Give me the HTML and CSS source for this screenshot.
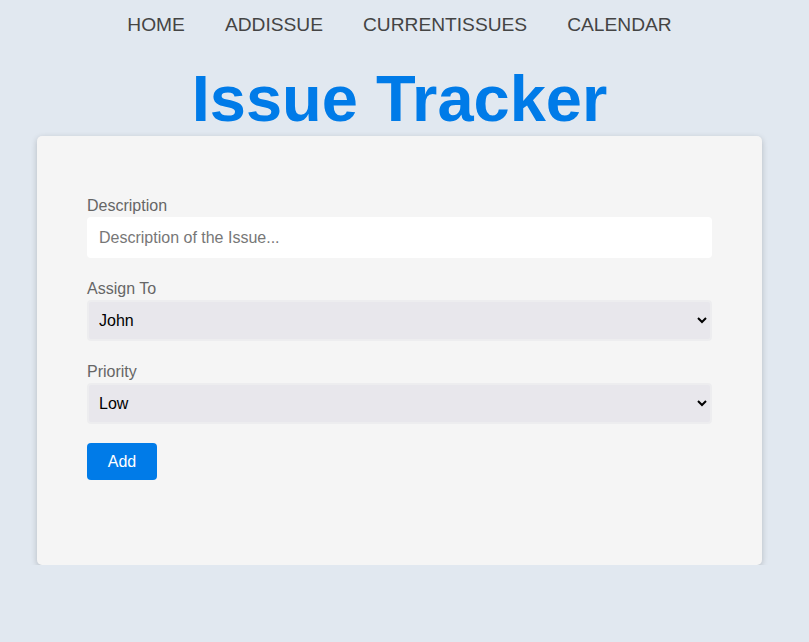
FILE: index.html
```html
<!DOCTYPE html>
<html lang="en">
<head>
<meta charset="utf-8">
<title>Issue Tracker</title>
<link rel="stylesheet" href="styles.css">
</head>
<body>
<div class="page">
  <nav class="nav">
    <a class="nav-link" href="#">HOME</a>
    <a class="nav-link" href="#">ADDISSUE</a>
    <a class="nav-link" href="#">CURRENTISSUES</a>
    <a class="nav-link" href="#">CALENDAR</a>
  </nav>
  <h1 class="title">Issue Tracker</h1>
  <div class="card">
    <form class="form">
      <div class="group">
        <label class="label" for="desc">Description</label>
        <input class="field input" id="desc" type="text" placeholder="Description of the Issue...">
      </div>
      <div class="group">
        <label class="label" for="assign">Assign To</label>
        <select class="field select" id="assign">
          <option>John</option>
          <option>Jane</option>
        </select>
      </div>
      <div class="group">
        <label class="label" for="prio">Priority</label>
        <select class="field select" id="prio">
          <option>Low</option>
          <option>Medium</option>
          <option>High</option>
        </select>
      </div>
      <button class="btn" type="button">Add</button>
    </form>
  </div>
</div>
</body>
</html>
```

FILE: styles.css
```css
html, body {
  margin: 0;
  padding: 0;
  background: #e1e8f0;
  font-family: "Liberation Sans", Arial, sans-serif;
}
.page {
  width: 799px;
}
.nav {
  display: flex;
  justify-content: center;
  gap: 40px;
  padding-top: 14px;
}
.nav-link {
  font-size: 19.2px;
  line-height: 22px;
  color: #444444;
  text-decoration: none;
}
.title {
  margin: 26px 0 0;
  text-align: center;
  font-size: 65px;
  line-height: 74px;
  font-weight: bold;
  color: #007be8;
}
.card {
  margin: 0 37px;
  background: #f5f5f5;
  border-radius: 5px;
  box-shadow: 0 2px 6px rgba(0, 0, 0, 0.2);
  padding: 61px 50px 85px;
}
.form {
  display: flex;
  flex-direction: column;
}
.group {
  display: flex;
  flex-direction: column;
  gap: 2px;
  margin-bottom: 22px;
}
.group:last-of-type {
  margin-bottom: 19px;
}
.label {
  font-size: 16px;
  line-height: 18px;
  color: #666666;
}
.field {
  box-sizing: border-box;
  width: 625px;
  height: 41px;
  margin: 0;
  font-family: "Liberation Sans", Arial, sans-serif;
  font-size: 16px;
  border-radius: 4px;
  outline: none;
}
.input {
  border: none;
  background: #ffffff;
  padding: 0 12px;
  color: #333;
}
.input::placeholder {
  color: #777777;
}
.select {
  background-color: #e8e7ec;
  border: 2px solid #ededef;
  padding: 0 6px 0 6px;
  color: #000;
}
.btn {
  align-self: flex-start;
  width: 70px;
  height: 37px;
  margin: 0;
  border: none;
  border-radius: 4px;
  background: #007be8;
  color: #ffffff;
  font-family: "Liberation Sans", Arial, sans-serif;
  font-size: 16px;
  cursor: pointer;
}
```
